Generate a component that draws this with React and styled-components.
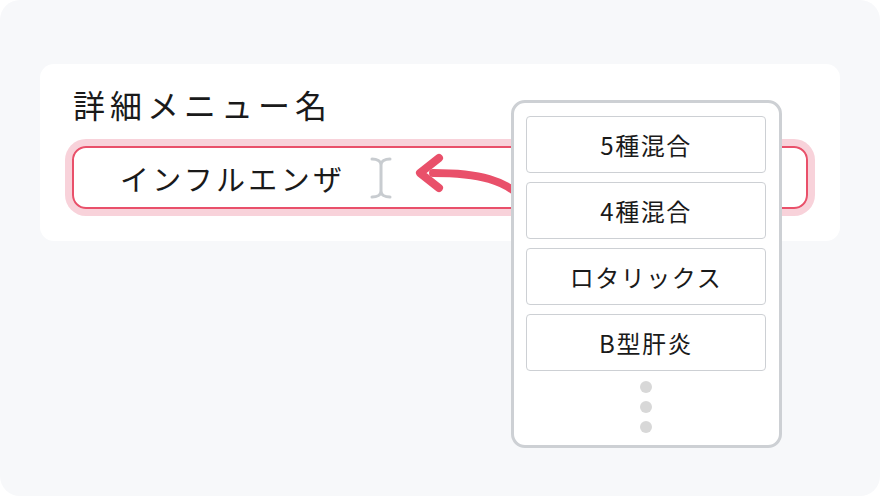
import React from "react";
import styled, { createGlobalStyle } from "styled-components";

const Global = createGlobalStyle`
  html, body { margin: 0; padding: 0; background: #ffffff; }
  body { font-family: "Noto Sans CJK JP", "Noto Sans", sans-serif; color: #1c1c1c; }
`;

const Frame = styled.div`
  position: relative;
  width: 880px;
  height: 496px;
  box-sizing: border-box;
  background: #f7f8fa;
  border-radius: 20px;
  padding: 64px 40px 0;
  overflow: hidden;
`;

const Card = styled.section`
  background: #ffffff;
  border-radius: 14px;
  padding: 20px 32px 32px;
  display: flex;
  flex-direction: column;
  gap: 22px;
`;

const Label = styled.div`
  font-size: 32px;
  line-height: 40px;
  letter-spacing: 5px;
  padding-left: 1px;
  color: #1a1a1a;
`;

const Input = styled.div`
  height: 63px;
  box-sizing: border-box;
  border: 2px solid #e9506a;
  border-radius: 14px;
  box-shadow: 0 0 0 7px #f8d2da;
  display: flex;
  align-items: center;
  padding-left: 46px;
  gap: 24px;
`;

const Value = styled.span`
  font-size: 29px;
  letter-spacing: 3.3px;
  color: #1a1a1a;
`;

const Caret = styled.svg`
  width: 24px;
  height: 42px;
  flex: none;
`;

const ArrowSvg = styled.svg`
  position: absolute;
  left: 400px;
  top: 145px;
  width: 130px;
  height: 70px;
  overflow: visible;
`;

const Panel = styled.div`
  position: absolute;
  left: 511px;
  top: 100px;
  width: 271px;
  height: 348px;
  box-sizing: border-box;
  background: #ffffff;
  border: 3px solid #cdd0d4;
  border-radius: 14px;
  padding: 13px 13px 0 12px;
  display: flex;
  flex-direction: column;
  gap: 9px;
`;

const Option = styled.div`
  height: 57px;
  box-sizing: border-box;
  border: 1.5px solid #cdd0d4;
  border-radius: 4px;
  display: flex;
  align-items: center;
  justify-content: center;
  font-size: 24px;
  letter-spacing: 1.5px;
  color: #1a1a1a;
`;

const Dots = styled.div`
  display: flex;
  flex-direction: column;
  align-items: center;
  gap: 8px;
  padding-top: 1px;
`;

const Dot = styled.span`
  width: 12px;
  height: 12px;
  border-radius: 50%;
  background: #d8d8d8;
`;

const options = ["5種混合", "4種混合", "ロタリックス", "B型肝炎"];

export default function App() {
  return (
    <>
      <Global />
      <Frame>
        <Card>
          <Label>詳細メニュー名</Label>
          <Input>
            <Value>インフルエンザ</Value>
            <Caret viewBox="0 0 24 42">
              <path
                d="M3 2 C8 2 12 4 12 8 L12 34 C12 38 8 40 3 40 M21 2 C16 2 12 4 12 8 M12 34 C12 38 16 40 21 40"
                fill="none"
                stroke="#c8ccd0"
                strokeWidth="3"
                strokeLinecap="round"
              />
            </Caret>
          </Input>
        </Card>
        <ArrowSvg viewBox="0 0 130 70">
          <path
            d="M125 55 C105 35 80 28 33 28"
            fill="none"
            stroke="#e9506a"
            strokeWidth="8"
            strokeLinecap="round"
          />
          <path
            d="M39 13 L20 28 L39 43"
            fill="none"
            stroke="#e9506a"
            strokeWidth="8"
            strokeLinecap="round"
            strokeLinejoin="round"
          />
        </ArrowSvg>
        <Panel>
          {options.map((o) => (
            <Option key={o}>{o}</Option>
          ))}
          <Dots>
            <Dot />
            <Dot />
            <Dot />
          </Dots>
        </Panel>
      </Frame>
    </>
  );
}
